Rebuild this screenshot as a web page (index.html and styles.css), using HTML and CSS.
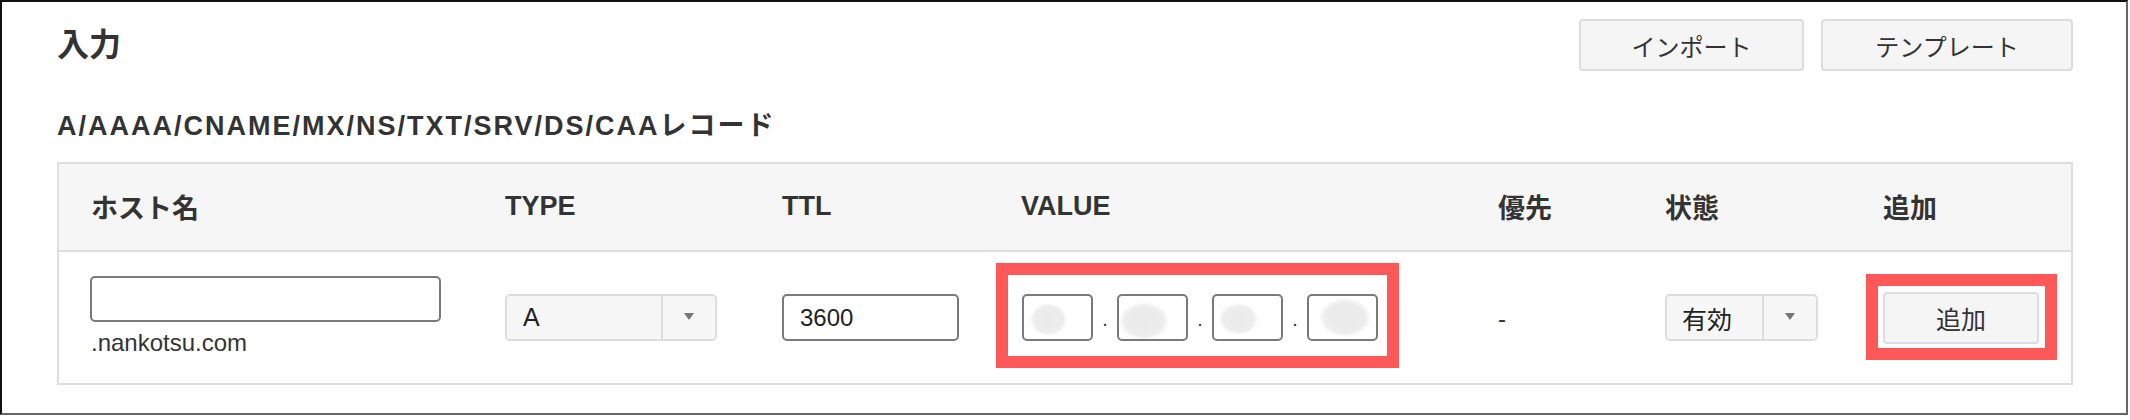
FILE: index.html
```html
<!DOCTYPE html>
<html lang="ja">
<head>
<meta charset="utf-8">
<title>入力</title>
<link rel="stylesheet" href="styles.css">
</head>
<body>
<div class="frame">
  <div class="top">
    <h1 class="title">入力</h1>
    <div class="actions">
      <button class="btn btn-import">インポート</button>
      <button class="btn btn-template">テンプレート</button>
    </div>
  </div>
  <h2 class="subtitle">A/AAAA/CNAME/MX/NS/TXT/SRV/DS/CAAレコード</h2>
  <div class="table">
    <div class="row head">
      <div class="cell c-host">ホスト名</div>
      <div class="cell">TYPE</div>
      <div class="cell">TTL</div>
      <div class="cell">VALUE</div>
      <div class="cell">優先</div>
      <div class="cell">状態</div>
      <div class="cell">追加</div>
    </div>
    <div class="row body">
      <div class="cell c-host">
        <div class="host-group">
          <div class="field host-field"></div>
          <div class="suffix">.nankotsu.com</div>
        </div>
      </div>
      <div class="cell">
        <div class="select select-type">
          <span class="select-label">A</span>
          <span class="select-arrow"><i class="tri"></i></span>
        </div>
      </div>
      <div class="cell">
        <div class="field ttl-field">3600</div>
      </div>
      <div class="cell c-value">
        <div class="ip">
          <div class="field oct"><span class="blob b1"></span></div>
          <span class="dot">.</span>
          <div class="field oct"><span class="blob b2"></span></div>
          <span class="dot">.</span>
          <div class="field oct"><span class="blob b3"></span></div>
          <span class="dot">.</span>
          <div class="field oct"><span class="blob b4"></span></div>
        </div>
        <div class="mark mark-value"></div>
      </div>
      <div class="cell c-prio">-</div>
      <div class="cell">
        <div class="select select-state">
          <span class="select-label">有効</span>
          <span class="select-arrow"><i class="tri"></i></span>
        </div>
      </div>
      <div class="cell c-add">
        <button class="btn btn-add">追加</button>
        <div class="mark mark-add"></div>
      </div>
    </div>
  </div>
</div>
</body>
</html>
```

FILE: styles.css
```css
html, body {
  margin: 0;
  padding: 0;
  background: #ffffff;
}

body {
  font-family: "Liberation Sans", "Noto Sans CJK JP", sans-serif;
  color: #333333;
}

.frame {
  box-sizing: border-box;
  width: 2128px;
  height: 415px;
  border-top: 2px solid #111111;
  border-left: 2px solid #111111;
  border-right: 2px solid #666666;
  border-bottom: 2px solid #666666;
  padding: 17px 53px 0 55px;
}

.top {
  display: flex;
  justify-content: space-between;
  align-items: center;
  height: 52px;
}

.title {
  margin: 0 0 6px 0;
  font-family: "Noto Sans CJK JP", sans-serif;
  font-weight: 700;
  font-size: 32px;
  line-height: 40px;
  color: #333333;
}

.actions {
  display: flex;
  gap: 17px;
}

.btn {
  box-sizing: border-box;
  height: 52px;
  padding: 0;
  border: 2px solid #dddddd;
  border-radius: 4px;
  background: #f5f5f5;
  font-family: "Liberation Sans", "Noto Sans CJK JP", sans-serif;
  font-size: 24px;
  font-weight: 400;
  color: #333333;
}

.btn-import { width: 225px; }
.btn-template { width: 252px; }

.subtitle {
  margin: 37px 0 0 0;
  font-family: "Liberation Sans", "Noto Sans CJK JP", sans-serif;
  font-weight: 700;
  font-size: 27px;
  line-height: 36px;
  letter-spacing: 2px;
  color: #333333;
}

.table {
  margin-top: 18px;
  border: 2px solid #dedede;
}

.row {
  display: grid;
  grid-template-columns: 412px 277px 239px 477px 167px 218px 222px;
}

.head {
  height: 86px;
  background: #f6f6f6;
  border-bottom: 2px solid #dedede;
}

.body {
  height: 131px;
}

.cell {
  position: relative;
  display: flex;
  align-items: center;
  padding-left: 34px;
}

.head .cell {
  font-size: 27px;
  font-weight: 700;
  color: #333333;
  padding-bottom: 2px;
}

.cell.c-host {
  padding-left: 32px;
}

.host-group {
  display: flex;
  flex-direction: column;
  margin-top: -3px;
}

.field {
  box-sizing: border-box;
  border: 2px solid #7a7a7a;
  border-radius: 5px;
  background: #ffffff;
  height: 47px;
}

.host-field {
  width: 351px;
  height: 46px;
  margin-left: -1px;
}

.suffix {
  margin-top: 7px;
  font-size: 24px;
  line-height: 28px;
  color: #333333;
}

.select {
  box-sizing: border-box;
  display: flex;
  height: 47px;
  border: 2px solid #dddddd;
  border-radius: 5px;
  background: #f7f7f7;
  font-size: 25px;
  color: #222222;
}

.select-type { width: 212px; }
.select-state { width: 153px; }

.select-label {
  flex: 1;
  display: flex;
  align-items: center;
  padding-left: 16px;
  border-right: 2px solid #dddddd;
}

.select-state .select-label {
  padding-left: 15px;
}

.select-arrow {
  width: 52px;
  display: flex;
  align-items: center;
  justify-content: center;
}

.tri {
  width: 0;
  height: 0;
  border-left: 5px solid transparent;
  border-right: 5px solid transparent;
  border-top: 7px solid #777777;
  margin-top: -2px;
}

.ttl-field {
  width: 177px;
  display: flex;
  align-items: center;
  padding-left: 16px;
  font-size: 24px;
  color: #222222;
}

.ip {
  display: flex;
  align-items: center;
  margin-left: 1px;
}

.oct {
  width: 71px;
  display: flex;
  align-items: center;
  overflow: hidden;
}

.dot {
  width: 24px;
  text-align: center;
  font-size: 20px;
  line-height: 47px;
  color: #333333;
  padding-top: 4px;
}

.blob {
  display: block;
  border-radius: 50%;
  background: radial-gradient(ellipse at center, #eaeaea 0%, #ededed 55%, rgba(240,240,240,0) 72%);
}

.b1 { width: 37px; height: 33px; margin-left: 6px; margin-top: 3px; }
.b2 { width: 50px; height: 38px; margin-left: 0; margin-top: 6px; }
.b3 { width: 39px; height: 32px; margin-left: 5px; margin-top: 3px; }
.b4 { width: 52px; height: 39px; margin-left: 10px; margin-top: 0; }

.c-prio {
  font-size: 24px;
  padding-top: 2px;
}

.btn-add {
  width: 156px;
  font-size: 25px;
  margin-top: 0;
}

.mark {
  position: absolute;
  box-sizing: border-box;
  border: 12px solid #ff5858;
  pointer-events: none;
}

.mark-value {
  left: 9px;
  top: 11px;
  width: 403px;
  height: 105px;
}

.mark-add {
  left: 17px;
  top: 22px;
  width: 191px;
  height: 86px;
}
```
